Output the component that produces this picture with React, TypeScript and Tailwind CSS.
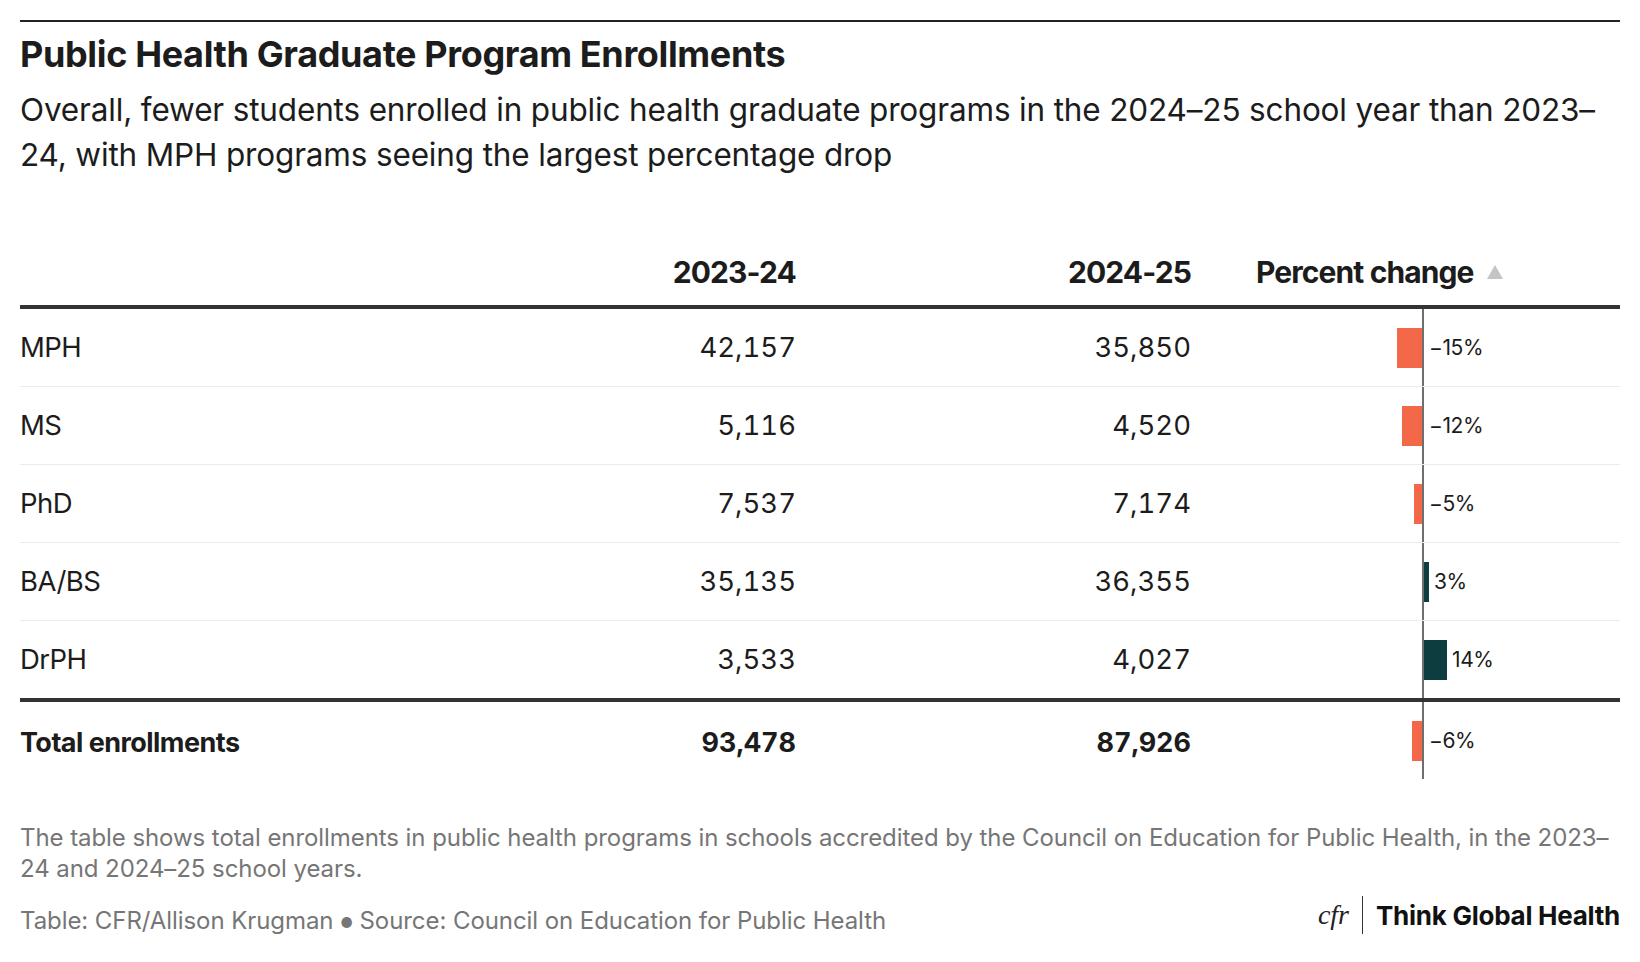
import React from "react";

type Row = { label: string; a: string; b: string; pct: number; text: string };

const rows: Row[] = [
  { label: "MPH", a: "42,157", b: "35,850", pct: -15, text: "−15%" },
  { label: "MS", a: "5,116", b: "4,520", pct: -12, text: "−12%" },
  { label: "PhD", a: "7,537", b: "7,174", pct: -5, text: "−5%" },
  { label: "BA/BS", a: "35,135", b: "36,355", pct: 3, text: "3%" },
  { label: "DrPH", a: "3,533", b: "4,027", pct: 14, text: "14%" },
];

const total: Row = { label: "Total enrollments", a: "93,478", b: "87,926", pct: -6, text: "−6%" };

const PX = 1.65;

function PctCell({ pct, text }: { pct: number; text: string }) {
  const w = Math.abs(pct) * PX;
  return (
    <div className="flex h-full">
      <div className="w-[231px] flex justify-end items-center">
        {pct < 0 && <div className="h-[40px] bg-[#f26849]" style={{ width: w }} />}
      </div>
      <div className="w-[2px] self-stretch bg-[#6f6f6f]" />
      <div className="flex items-center">
        {pct > 0 && <div className="h-[40px] bg-[#0e3d40]" style={{ width: w }} />}
        <span className="ml-[5px] text-[21px] font-normal tracking-[-0.02em] text-[#1c1c1c]">{text}</span>
      </div>
    </div>
  );
}

export default function App() {
  return (
    <div
      className="w-[1640px] h-[962px] bg-white px-[20px] pt-[20px] text-[#1c1c1c]"
      style={{ fontFamily: "Inter, 'Liberation Sans', sans-serif" }}
    >
      <div className="h-[2px] bg-[#222]" />
      <h1 className="mt-[12px] text-[36px] leading-[40px] font-bold tracking-[-0.01em]">
        Public Health Graduate Program Enrollments
      </h1>
      <p className="mt-[13px] text-[31.5px] leading-[45px] tracking-[-0.005em]">
        Overall, fewer students enrolled in public health graduate programs in the 2024–25 school year than 2023–
        <br />
        24, with MPH programs seeing the largest percentage drop
      </p>

      <div className="mt-[62px]">
        <div className="grid grid-cols-[556px_220px_395px_429px] h-[70px] items-center border-b-4 border-[#333] text-[30px] font-bold tracking-[-0.03em]">
          <div />
          <div className="text-right">2023-24</div>
          <div className="text-right">2024-25</div>
          <div className="pl-[65px] flex items-center">
            <span>Percent change</span>
            <svg width="16" height="14" viewBox="0 0 16 14" className="ml-[14px]">
              <polygon points="8,0 16,14 0,14" fill="#c4c4c4" />
            </svg>
          </div>
        </div>

        {rows.map((r, i) => (
          <div
            key={r.label}
            className={
              "grid grid-cols-[556px_220px_395px_429px] h-[77px] items-center text-[27.5px] tracking-[-0.02em] " +
              (i < rows.length - 1 ? "box-content border-b border-[#ebebeb]" : "")
            }
          >
            <div>{r.label}</div>
            <div className="text-right tabular-nums tracking-normal">{r.a}</div>
            <div className="text-right tabular-nums tracking-normal">{r.b}</div>
            <PctCell pct={r.pct} text={r.text} />
          </div>
        ))}

        <div className="border-t-4 border-[#333] grid grid-cols-[556px_220px_395px_429px] h-[81px] items-center text-[27px] font-bold tracking-[-0.02em]">
          <div className="pt-[6px]">{total.label}</div>
          <div className="pt-[6px] text-right tabular-nums tracking-normal">{total.a}</div>
          <div className="pt-[6px] text-right tabular-nums tracking-normal">{total.b}</div>
          <div className="h-full">
            <PctCell pct={total.pct} text={total.text} />
          </div>
        </div>
      </div>

      <p className="mt-[43px] text-[24px] leading-[31px] text-[#767676] tracking-[-0.003em]">
        The table shows total enrollments in public health programs in schools accredited by the Council on Education for Public Health, in the 2023–
        <br />
        24 and 2024–25 school years.
      </p>

      <div className="mt-[21px] flex items-center justify-between">
        <div className="text-[24px] leading-[31px] text-[#767676] tracking-[-0.003em]">
          Table: CFR/Allison Krugman <span className="text-[14px] align-middle">●</span> Source: Council on Education for Public Health
        </div>
        <div className="flex items-center -mt-[12px]">
          <span
            className="italic text-[28px] leading-none text-[#222]"
            style={{ fontFamily: "'Liberation Serif', serif" }}
          >
            cfr
          </span>
          <div className="mx-[13px] w-px h-[38px] bg-[#333]" />
          <span className="text-[26px] font-bold tracking-[-0.01em] text-[#111]">Think Global Health</span>
        </div>
      </div>
    </div>
  );
}
